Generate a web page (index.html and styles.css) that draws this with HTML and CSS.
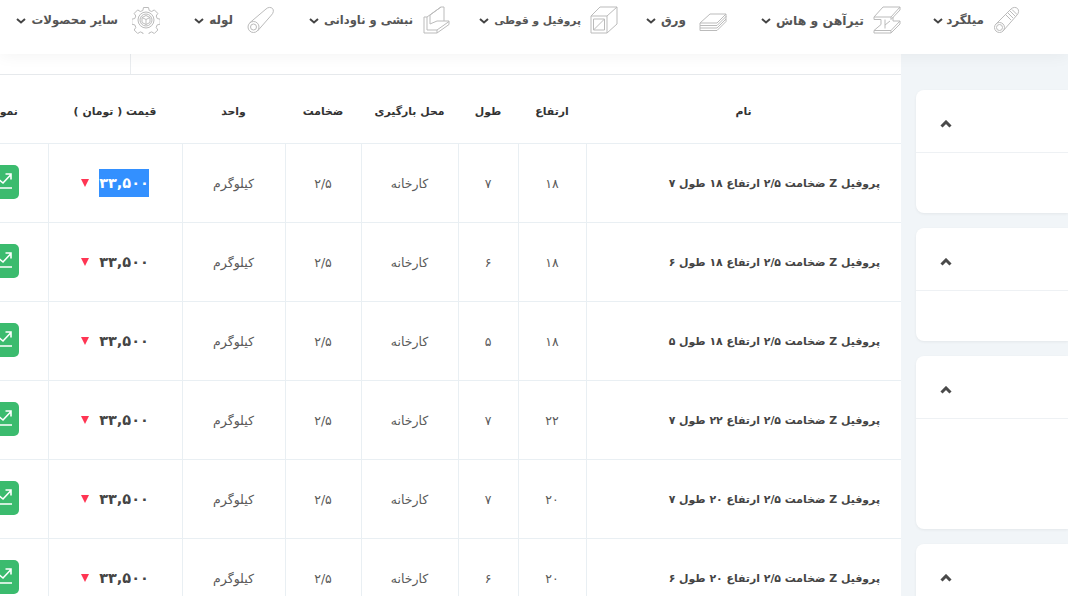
FILE: index.html
```
<!DOCTYPE html>
<html lang="fa" dir="rtl">
<head>
<meta charset="utf-8">
<title>قیمت پروفیل</title>
<link rel="stylesheet" href="styles.css">
</head>
<body>
<div class="page">
  <header class="topbar">
    <nav class="nav">
      <a class="nav-item w1"><svg class="nav-icon" viewBox="0 0 28 28"><circle cx="6.500" cy="21.500" r="5"/><circle cx="6.500" cy="21.500" r="3"/><path d="M3 18 18 3c2-2 5-2 6.500-.5s1.500 4.500-.5 6.500L10 25"/><path d="M15 7l5 5M17 5l5.500 5.500M19 3.500l5 5M13 9l5 5"/></svg><span class="nav-label">میلگرد</span><svg class="nav-chev" viewBox="0 0 10 6"><path d="M1 1l4 3.500L9 1"/></svg></a>
      <a class="nav-item w2"><svg class="nav-icon" viewBox="0 0 28 28"><path d="M1 11 10 1h17l-9 10H1zM1 11v2.500h7M18 11v2.500L27 4V1"/><path d="M8 13.500v5L1 24.500V27h17l9-9v-3h-7v-4M1 24.500h17l9-9.500M18 24.500V27"/><path d="M12 13.500v9M12 19l5-4"/></svg><span class="nav-label">تیرآهن و هاش</span><svg class="nav-chev" viewBox="0 0 10 6"><path d="M1 1l4 3.500L9 1"/></svg></a>
      <a class="nav-item w3"><svg class="nav-icon" viewBox="0 0 28 28"><path d="M1 17 11 8h16l-9 9z"/><path d="M1 17v2.500h17l9-9V8M1 19.500V22h17l9-9v-3M1 22v2.500h17l9-9V13"/></svg><span class="nav-label">ورق</span><svg class="nav-chev" viewBox="0 0 10 6"><path d="M1 1l4 3.500L9 1"/></svg></a>
      <a class="nav-item w4"><svg class="nav-icon" viewBox="0 0 28 28"><path d="M1 10h16v17H1zM3.500 13h11v11h-11zM3.500 24l11-11M1 10 10 1h17v17l-10 9M17 10 27 1"/></svg><span class="nav-label">پروفیل و قوطی</span><svg class="nav-chev" viewBox="0 0 10 6"><path d="M1 1l4 3.500L9 1"/></svg></a>
      <a class="nav-item w5"><svg class="nav-icon" viewBox="0 0 28 28"><path d="M2 11v16h13l12-8.500V15H15l-7 3V9l11-8h3v14"/><path d="M2 11h3l14-10M5 11v13h10l12-8.500M15 24v3"/></svg><span class="nav-label">نبشی و ناودانی</span><svg class="nav-chev" viewBox="0 0 10 6"><path d="M1 1l4 3.500L9 1"/></svg></a>
      <a class="nav-item w6"><svg class="nav-icon" viewBox="0 0 28 28"><circle cx="6.500" cy="21" r="5.500"/><circle cx="6.500" cy="21" r="3"/><path d="M2.500 17 19 3c2-2 5-2 6.500-.5s1 4.500-1 6.500L10.500 25"/></svg><span class="nav-label">لوله</span><svg class="nav-chev" viewBox="0 0 10 6"><path d="M1 1l4 3.500L9 1"/></svg></a>
      <a class="nav-item w7"><svg class="nav-icon" viewBox="0 0 28 28"><path d="M11.500 1.500h5l.7 3 2.500 1 2.600-1.600 3.500 3.500-1.600 2.600 1 2.500 3 .7v5l-3 .7-1 2.500 1.600 2.600-3.500 3.500-2.600-1.600-2.500 1-.7 3h-5l-.7-3-2.500-1-2.600 1.600-3.500-3.500 1.600-2.600-1-2.500-3-.7v-5l3-.7 1-2.500-1.600-2.600 3.500-3.500 2.600 1.600 2.500-1z"/><circle cx="14" cy="14" r="8"/><circle cx="14" cy="14" r="6"/><path d="M14 9.500l4 2v5l-4 2-4-2v-5zM10 11.500l4 2 4-2M14 13.500v5"/></svg><span class="nav-label">سایر محصولات</span><svg class="nav-chev" viewBox="0 0 10 6"><path d="M1 1l4 3.500L9 1"/></svg></a>
    </nav>
  </header>

  <div class="content">
    <aside class="side">
      <section class="card card-a"><div class="card-head"><svg class="card-chev" viewBox="0 0 12 8"><path d="M1.500 6.500 6 2l4.500 4.500"/></svg></div></section>
      <section class="card card-b"><div class="card-head"><svg class="card-chev" viewBox="0 0 12 8"><path d="M1.500 6.500 6 2l4.500 4.500"/></svg></div></section>
      <section class="card card-c"><div class="card-head"><svg class="card-chev" viewBox="0 0 12 8"><path d="M1.500 6.500 6 2l4.500 4.500"/></svg></div></section>
      <section class="card card-d"><div class="card-head"><svg class="card-chev" viewBox="0 0 12 8"><path d="M1.500 6.500 6 2l4.500 4.500"/></svg></div></section>
    </aside>

    <main class="panel">
      <div class="band"><div class="band-cell"></div></div>
      <table class="grid">
        <colgroup>
          <col class="c-name"><col class="c-h"><col class="c-l"><col class="c-place"><col class="c-t"><col class="c-unit"><col class="c-price"><col class="c-chart">
        </colgroup>
        <thead>
          <tr><th>نام</th><th>ارتفاع</th><th>طول</th><th>محل بارگیری</th><th>ضخامت</th><th>واحد</th><th>قیمت ( تومان )</th><th>نمودار</th></tr>
        </thead>
        <tbody>
          <tr><td class="name">پروفیل Z ضخامت ۲/۵ ارتفاع ۱۸ طول ۷</td><td>۱۸</td><td>۷</td><td>کارخانه</td><td>۲/۵</td><td>کیلوگرم</td><td class="tight"><div class="price"><span class="amount selected">۳۳,۵۰۰</span><span class="down"></span></div></td><td class="tight"><a class="chart-btn"><svg viewBox="0 0 22 22"><path d="M1 12l6-5 6 5 8-8.500M15.500 3H21v5.500M0 17h22"/></svg></a></td></tr>
          <tr><td class="name">پروفیل Z ضخامت ۲/۵ ارتفاع ۱۸ طول ۶</td><td>۱۸</td><td>۶</td><td>کارخانه</td><td>۲/۵</td><td>کیلوگرم</td><td class="tight"><div class="price"><span class="amount">۳۳,۵۰۰</span><span class="down"></span></div></td><td class="tight"><a class="chart-btn"><svg viewBox="0 0 22 22"><path d="M1 12l6-5 6 5 8-8.500M15.500 3H21v5.500M0 17h22"/></svg></a></td></tr>
          <tr><td class="name">پروفیل Z ضخامت ۲/۵ ارتفاع ۱۸ طول ۵</td><td>۱۸</td><td>۵</td><td>کارخانه</td><td>۲/۵</td><td>کیلوگرم</td><td class="tight"><div class="price"><span class="amount">۳۳,۵۰۰</span><span class="down"></span></div></td><td class="tight"><a class="chart-btn"><svg viewBox="0 0 22 22"><path d="M1 12l6-5 6 5 8-8.500M15.500 3H21v5.500M0 17h22"/></svg></a></td></tr>
          <tr><td class="name">پروفیل Z ضخامت ۲/۵ ارتفاع ۲۲ طول ۷</td><td>۲۲</td><td>۷</td><td>کارخانه</td><td>۲/۵</td><td>کیلوگرم</td><td class="tight"><div class="price"><span class="amount">۳۳,۵۰۰</span><span class="down"></span></div></td><td class="tight"><a class="chart-btn"><svg viewBox="0 0 22 22"><path d="M1 12l6-5 6 5 8-8.500M15.500 3H21v5.500M0 17h22"/></svg></a></td></tr>
          <tr><td class="name">پروفیل Z ضخامت ۲/۵ ارتفاع ۲۰ طول ۷</td><td>۲۰</td><td>۷</td><td>کارخانه</td><td>۲/۵</td><td>کیلوگرم</td><td class="tight"><div class="price"><span class="amount">۳۳,۵۰۰</span><span class="down"></span></div></td><td class="tight"><a class="chart-btn"><svg viewBox="0 0 22 22"><path d="M1 12l6-5 6 5 8-8.500M15.500 3H21v5.500M0 17h22"/></svg></a></td></tr>
          <tr><td class="name">پروفیل Z ضخامت ۲/۵ ارتفاع ۲۰ طول ۶</td><td>۲۰</td><td>۶</td><td>کارخانه</td><td>۲/۵</td><td>کیلوگرم</td><td class="tight"><div class="price"><span class="amount">۳۳,۵۰۰</span><span class="down"></span></div></td><td class="tight"><a class="chart-btn"><svg viewBox="0 0 22 22"><path d="M1 12l6-5 6 5 8-8.500M15.500 3H21v5.500M0 17h22"/></svg></a></td></tr>
        </tbody>
      </table>
    </main>
  </div>
</div>
</body>
</html>
```
FILE: styles.css
```
* { box-sizing: border-box; }
html, body { margin: 0; padding: 0; }
body { font-family: "DejaVu Sans", sans-serif; color: #444; background: #f1f5f8; }
.page { width: 1068px; height: 596px; overflow: hidden; display: flex; flex-direction: column; }

.topbar { flex: 0 0 54px; background: #fff; position: relative; z-index: 2; box-shadow: 0 3px 14px rgba(0, 0, 0, .045); }
.nav { display: flex; padding-right: 47px; }
.nav-item { display: flex; align-items: center; height: 40px; flex: none; }
.w1 { width: 120px; } .w2 { width: 174px; } .w3 { width: 109px; } .w4 { width: 168px; }
.w5 { width: 175px; } .w6 { width: 115px; } .w7 { width: 142px; }
.nav-icon { width: 28px; height: 28px; flex: none; fill: none; stroke: #bbb; stroke-width: 1; }
.nav-label { margin-right: 9px; font-size: 12px; font-weight: 700; color: #555; white-space: nowrap; }
.w1 .nav-chev { margin-right: 3px; }
.w2 .nav-label { font-size: 12.400px; }
.w3 .nav-label { margin-right: 13px; }
.w4 .nav-label { font-size: 10.700px; }
.w5 .nav-label { font-size: 11.500px; }
.w6 .nav-label { margin-right: 14px; }
.w7 .nav-label { font-size: 11.700px; margin-right: 14px; }
.nav-chev { width: 10px; height: 6px; margin-right: 5px; margin-top: 2px; flex: none; fill: none; stroke: #444; stroke-width: 2; }

.content { flex: 1; display: flex; min-height: 0; }
.side { flex: 0 0 167px; padding: 36px 0 0 0; display: flex; flex-direction: column; gap: 15px; }
.card { flex: none; width: 152px; background: #fff; border-top-left-radius: 8px; border-bottom-left-radius: 8px; box-shadow: 0 1px 3px rgba(0, 0, 0, .06); }
.card-a { height: 123px; } .card-b { height: 113px; } .card-c { height: 173px; } .card-d { height: 123px; }
.card-head { height: 63px; padding: 6px 0 0 24px; border-bottom: 1px solid #eef1f4; display: flex; align-items: center; justify-content: flex-end; }
.card-chev { width: 12px; height: 8px; flex: none; fill: none; stroke: #4a4a4a; stroke-width: 3; }

.panel { flex: 0 0 947px; background: #fff; }
.band { height: 21px; border-bottom: 1px solid #e6e9ec; }
.band-cell { width: 771px; height: 20px; border-left: 1px solid #e9ecef; }
.grid { table-layout: fixed; width: 947px; border-collapse: collapse; }
.c-name { width: 315px; } .c-h { width: 68px; } .c-l { width: 60px; } .c-place { width: 97px; }
.c-t { width: 76px; } .c-unit { width: 103px; } .c-price { width: 134px; } .c-chart { width: 94px; }
th { height: 68px; padding: 6px 0 0; font-size: 10.900px; font-weight: 700; color: #333; white-space: nowrap; border-bottom: 1px solid #e9eff3; text-align: center; }
td { height: 79px; padding: 2px 0 0; font-size: 12.500px; color: #5a5a5a; text-align: center; border-bottom: 1px solid #e9eff3; border-left: 1px solid #e9eff3; white-space: nowrap; }
td:last-child { border-left: 0; }
td.name { text-align: right; padding-right: 21px; font-weight: 700; font-size: 10.900px; color: #444; }
td.tight { padding: 0; }
.price { display: flex; align-items: center; justify-content: center; gap: 10px; }
.amount { display: block; line-height: 28px; font-size: 14.500px; font-weight: 700; color: #444; }
.selected { background: #3390ff; color: #fff; }
.down { width: 0; height: 0; flex: none; border-style: solid; border-width: 8px 4.500px 0; border-color: #ff3553 transparent transparent; }
.chart-btn { display: flex; align-items: center; justify-content: center; width: 36px; height: 34px; margin: 0 auto 1px; border-radius: 5px; background: #3bbb6e; }
.chart-btn svg { width: 22px; height: 22px; fill: none; stroke: #fff; stroke-width: 1.600; }
```
